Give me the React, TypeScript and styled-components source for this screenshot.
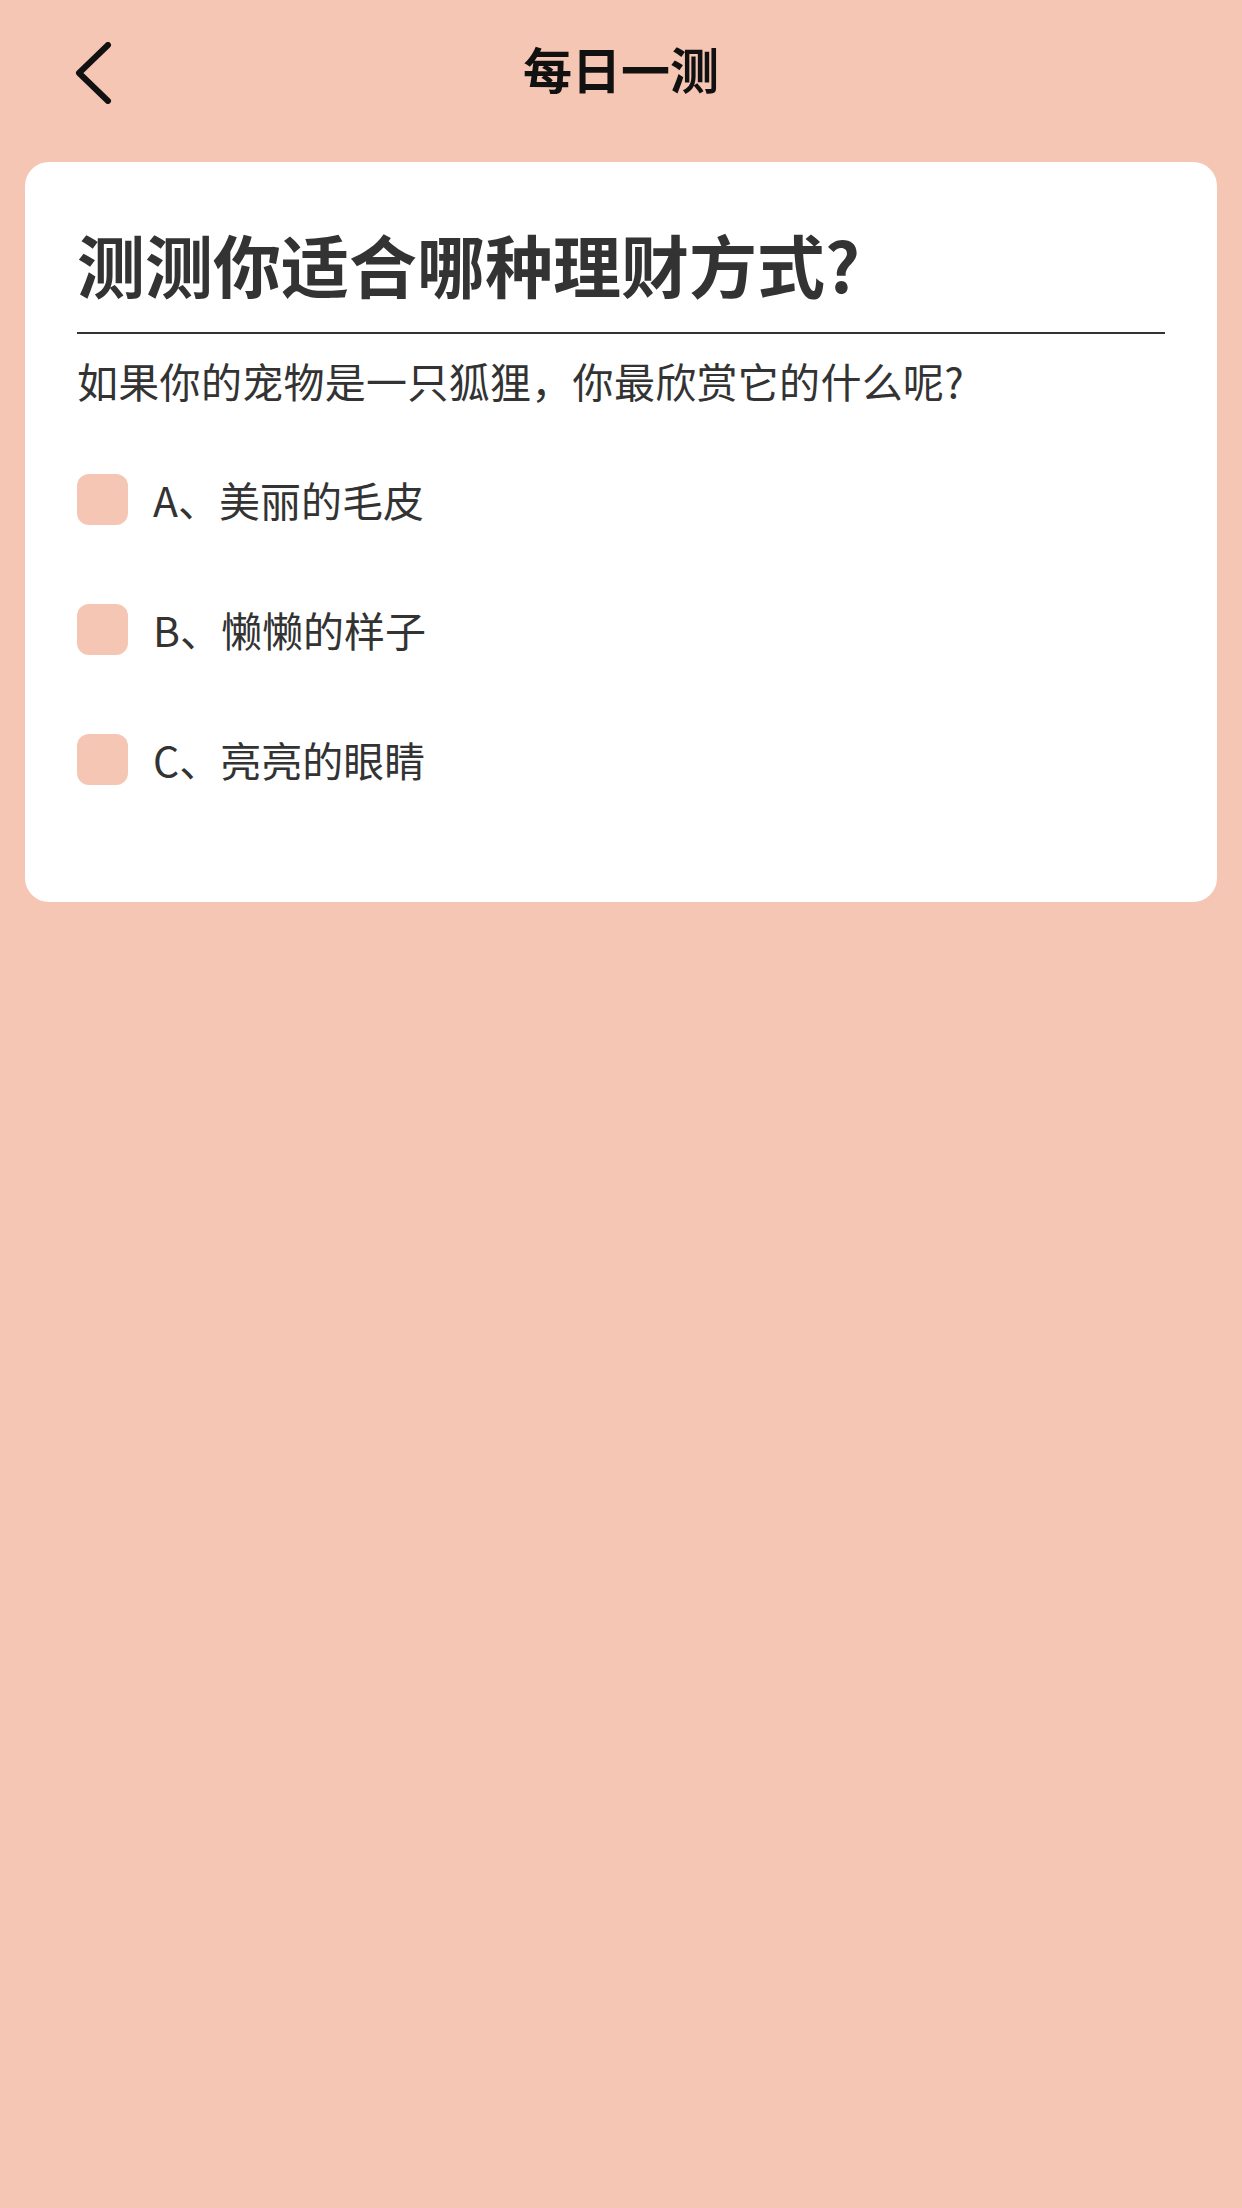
import React from "react";
import styled, { createGlobalStyle } from "styled-components";

const GlobalStyle = createGlobalStyle`
  html, body {
    margin: 0;
    padding: 0;
    background: #f5c6b4;
  }
  body {
    font-family: "Noto Sans CJK SC", "Noto Sans", sans-serif;
    min-height: 2208px;
  }
`;

const Page = styled.div`
  min-height: 2208px;
  background: #f5c6b4;
  padding: 0 25px;
  box-sizing: border-box;
`;

const Header = styled.header`
  position: relative;
  height: 140px;
  display: flex;
  align-items: center;
  justify-content: center;
`;

const BackButton = styled.button`
  position: absolute;
  left: 44px;
  top: 39px;
  width: 52px;
  height: 68px;
  padding: 0;
  border: none;
  background: transparent;
  display: flex;
  align-items: center;
  justify-content: center;
  cursor: pointer;
`;

const HeaderTitle = styled.h1`
  margin: 0 0 6px;
  font-size: 49px;
  line-height: 49px;
  font-weight: 600;
  color: #111;
  letter-spacing: 0;
`;

const Card = styled.section`
  margin-top: 22px;
  background: #ffffff;
  border-radius: 24px;
  padding: 68px 52px 117px;
  box-sizing: border-box;
`;

const QuizTitle = styled.h2`
  margin: 0;
  font-size: 68px;
  line-height: 68px;
  font-weight: 600;
  color: #333;
  padding-bottom: 34px;
  border-bottom: 2px solid #333;
`;

const Question = styled.p`
  margin: 24px 0 0;
  font-size: 41px;
  line-height: 44px;
  font-weight: 400;
  color: #333;
  letter-spacing: 0.3px;
`;

const Options = styled.ul`
  list-style: none;
  margin: 72px 0 0;
  padding: 0;
  display: flex;
  flex-direction: column;
  gap: 79px;
`;

const OptionRow = styled.li`
  display: flex;
  align-items: center;
  gap: 25px;
  height: 51px;
`;

const CheckBox = styled.span`
  flex: 0 0 auto;
  width: 51px;
  height: 51px;
  border-radius: 12px;
  background: #f5c6b4;
`;

const OptionText = styled.span`
  font-size: 41px;
  line-height: 51px;
  color: #333;
`;

const options = ["A、美丽的毛皮", "B、懒懒的样子", "C、亮亮的眼睛"];

export default function App() {
  return (
    <>
      <GlobalStyle />
      <Page>
        <Header>
          <BackButton aria-label="返回">
            <svg width="40" height="62" viewBox="0 0 40 62" fill="none">
              <path
                d="M33 3 L4 31 L33 59"
                stroke="#111"
                strokeWidth="6"
                strokeLinecap="round"
                strokeLinejoin="round"
              />
            </svg>
          </BackButton>
          <HeaderTitle>每日一测</HeaderTitle>
        </Header>
        <Card>
          <QuizTitle>测测你适合哪种理财方式?</QuizTitle>
          <Question>如果你的宠物是一只狐狸，你最欣赏它的什么呢?</Question>
          <Options>
            {options.map((o) => (
              <OptionRow key={o}>
                <CheckBox />
                <OptionText>{o}</OptionText>
              </OptionRow>
            ))}
          </Options>
        </Card>
      </Page>
    </>
  );
}
